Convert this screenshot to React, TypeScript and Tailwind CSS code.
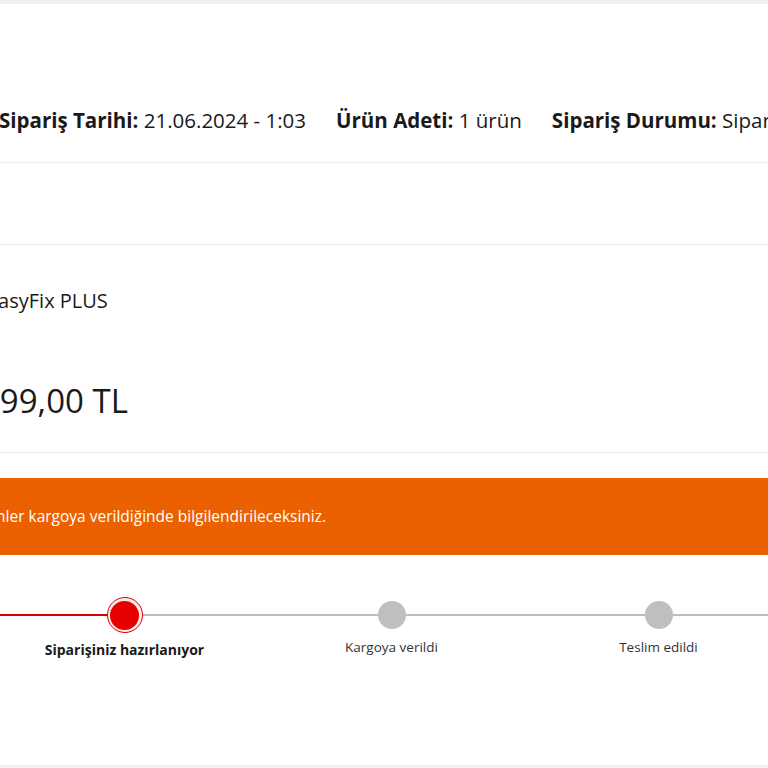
import React from 'react';

const steps = [
  { label: 'Siparişiniz alındı', state: 'done' },
  { label: 'Siparişiniz hazırlanıyor', state: 'active' },
  { label: 'Kargoya verildi', state: 'todo' },
  { label: 'Teslim edildi', state: 'todo' },
];

const InfoItem: React.FC<{ label: string; value: string }> = ({ label, value }) => (
  <span className="whitespace-nowrap">
    <span className="font-bold">{label}</span> {value}
  </span>
);

const App: React.FC = () => {
  return (
    <div
      className="w-[768px] h-[768px] overflow-hidden bg-white text-[#1a1a1a] flex flex-col"
      style={{ fontFamily: '"Open Sans", "Noto Sans", sans-serif' }}
    >
      <div className="h-[4px] bg-[#efefef] shrink-0" />

      {/* order info */}
      <div className="border-b border-[#ececec] pt-[102px] pb-[28px] shrink-0">
        <div className="ml-[-1px] flex gap-[30px] text-[20.5px] leading-[28px] whitespace-nowrap">
          <InfoItem label="Sipariş Tarihi:" value="21.06.2024 - 1:03" />
          <InfoItem label="Ürün Adeti:" value="1 ürün" />
          <InfoItem label="Sipariş Durumu:" value="Siparişiniz hazırlanıyor" />
        </div>
      </div>

      <div className="h-[82px] border-b border-[#ececec] shrink-0" />

      {/* product */}
      <div className="border-b border-[#ececec] shrink-0 pt-[42px] pb-[31px]">
        <div className="ml-[-13px] flex flex-col whitespace-nowrap">
          <div className="text-[20px] leading-[28px]">EasyFix PLUS</div>
          <div className="mt-[66px] ml-[-6px] text-[33px] leading-[40px]">399,00 TL</div>
        </div>
      </div>

      {/* notice */}
      <div className="mt-[25px] h-[77px] bg-[#eb6100] flex items-center shrink-0">
        <div className="ml-[-201px] text-white text-[15.5px] whitespace-nowrap">
          Siparişiniz hazırlanıyor. Ürünler kargoya verildiğinde bilgilendirileceksiniz.
        </div>
      </div>

      {/* progress */}
      <div className="pt-[42px] shrink-0">
        <div className="ml-[-276px] grid grid-cols-[repeat(4,267px)]">
          {steps.map((s, i) => {
            const leftRed = s.state === 'done' || s.state === 'active';
            const rightRed = s.state === 'done';
            return (
              <div key={s.label} className="flex flex-col items-center">
                <div className="w-full h-[36px] flex items-center">
                  <div className={`flex-1 h-[2px] ${i === 0 ? '' : leftRed ? 'bg-[#d40000]' : 'bg-[#bebebe]'}`} />
                  {s.state === 'active' ? (
                    <div className="w-[36px] h-[36px] rounded-full border border-[#d40000] bg-[#fdeaea] flex items-center justify-center">
                      <div className="w-[29px] h-[29px] rounded-full bg-[#e60000]" />
                    </div>
                  ) : s.state === 'done' ? (
                    <div className="w-[28px] h-[28px] rounded-full bg-[#e60000]" />
                  ) : (
                    <div className="w-[28px] h-[28px] rounded-full bg-[#bfbfbf]" />
                  )}
                  <div className={`flex-1 h-[2px] ${rightRed ? 'bg-[#d40000]' : 'bg-[#bebebe]'}`} />
                </div>
                <div
                  className={`whitespace-nowrap ${
                    s.state === 'active'
                      ? 'mt-[6px] text-[14px] font-bold text-[#1a1a1a]'
                      : 'mt-[4px] text-[13.5px] text-[#333]'
                  }`}
                >
                  {s.label}
                </div>
              </div>
            );
          })}
        </div>
      </div>

      <div className="flex-1" />
      <div className="h-[3px] bg-[#efefef] shrink-0" />
    </div>
  );
};

export default App;
